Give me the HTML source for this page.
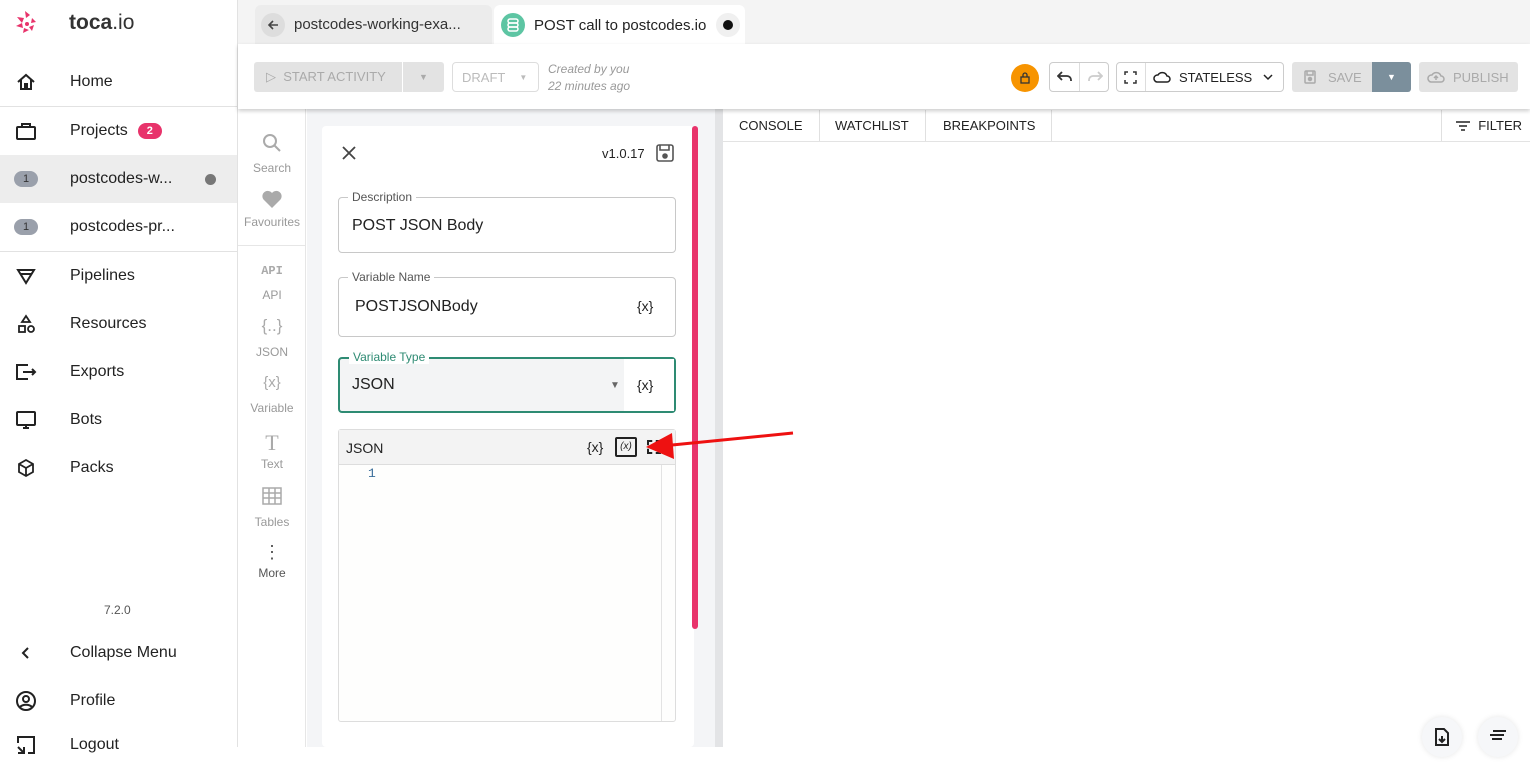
<!DOCTYPE html>
<html><head><meta charset="utf-8"><style>
*{box-sizing:border-box;margin:0;padding:0}
body{width:1530px;height:747px;overflow:hidden;font-family:"Liberation Sans",sans-serif;color:#222;background:#fff;position:relative}
.abs{position:absolute}
.side{left:0;top:0;width:238px;height:747px;border-right:1px solid #e2e2e2;background:#fff}
.nav{position:absolute;left:0;width:237px;height:48px;display:flex;align-items:center;font-size:16px;color:#222}
.nav .ic{width:70px;display:flex;justify-content:center;padding-right:18px}
.badge{background:#9aa0ab;color:#333;font-size:11px;border-radius:8px;width:24px;height:16px;display:flex;align-items:center;justify-content:center}
.hr{position:absolute;left:0;width:237px;height:1px;background:#e2e2e2}
.pal{position:absolute;left:238px;width:68px;text-align:center;font-size:12px;color:#999}
.fld{position:absolute;border:1px solid #c8c8c8;border-radius:4px}
.lbl{position:absolute;top:-8px;left:9px;background:#fff;padding:0 4px;font-size:12px;color:#555}
.btn{position:absolute;border:1px solid #ccc;border-radius:4px;background:#fff}
.tab{position:absolute;top:110px;height:31px;display:flex;align-items:center;font-size:13px;color:#222;border-right:1px solid #e0e0e0;padding:0 16px}
</style></head><body>
<div class="abs side">
 <svg class="abs" style="left:14px;top:9px" width="26" height="28" viewBox="0 0 26 28"><g fill="#e8336b"><path d="M11 2l5 4-4 3z"/><path d="M3 8l7 1-2 5z"/><path d="M2 17l6-3 1 5z"/><path d="M9 24l1-5 5 2z"/><path d="M18 22l-3-4 5-2z"/><path d="M22 13l-5 1 1-5z"/><circle cx="13" cy="15" r="2"/></g></svg>
 <div class="abs" style="left:69px;top:11px;font-size:21px;color:#333"><b style="font-weight:700">toca</b>.io</div>
 <div class="nav" style="top:58px"><span class="ic"><svg width="20" height="20" viewBox="0 0 20 20" fill="none" stroke="#222" stroke-width="2"><path d="M2 10L10 3l8 7M5 8v9h4v-5h2v5h4V8"/></svg></span>Home</div>
 <div class="hr" style="top:106px"></div>
 <div class="nav" style="top:107px"><span class="ic"><svg width="22" height="20" viewBox="0 0 22 20" fill="none" stroke="#222" stroke-width="2"><rect x="2" y="6" width="18" height="12" rx="1"/><path d="M7 6V3h8v3"/></svg></span>Projects<span style="margin-left:10px;background:#e8336b;color:#fff;font-size:11px;font-weight:bold;border-radius:8px;width:24px;height:16px;display:inline-flex;align-items:center;justify-content:center">2</span></div>
 <div class="nav" style="top:155px;background:#ededed"><span class="ic"><span class="badge">1</span></span>postcodes-w...<span style="position:absolute;left:205px;width:11px;height:11px;border-radius:50%;background:#777"></span></div>
 <div class="nav" style="top:203px"><span class="ic"><span class="badge">1</span></span>postcodes-pr...</div>
 <div class="hr" style="top:251px"></div>
 <div class="nav" style="top:252px"><span class="ic"><svg width="20" height="20" viewBox="0 0 20 20" fill="none" stroke="#222" stroke-width="2"><path d="M2 4h16L10 17z M5 8h10"/></svg></span>Pipelines</div>
 <div class="nav" style="top:300px"><span class="ic"><svg width="20" height="20" viewBox="0 0 20 20" fill="none" stroke="#222" stroke-width="1.8"><path d="M10 2l4 6H6z"/><rect x="3" y="12" width="6" height="6"/><circle cx="15" cy="15" r="3"/></svg></span>Resources</div>
 <div class="nav" style="top:348px"><span class="ic"><svg width="22" height="20" viewBox="0 0 22 20" fill="none" stroke="#222" stroke-width="2"><path d="M13 3H2v14h11M8 10h12M17 7l3 3-3 3"/></svg></span>Exports</div>
 <div class="nav" style="top:396px"><span class="ic"><svg width="22" height="20" viewBox="0 0 22 20" fill="none" stroke="#222" stroke-width="2"><rect x="2" y="2" width="18" height="13" rx="1"/><path d="M8 18h6M11 15v3"/></svg></span>Bots</div>
 <div class="nav" style="top:444px"><span class="ic"><svg width="20" height="20" viewBox="0 0 20 20" fill="none" stroke="#222" stroke-width="1.8"><path d="M10 2l7 4v8l-7 4-7-4V6zM3 6l7 4 7-4M10 10v8"/></svg></span>Packs</div>
 <div class="abs" style="left:104px;top:603px;font-size:12px;color:#555">7.2.0</div>
 <div class="nav" style="top:629px"><span class="ic"><svg width="12" height="16" viewBox="0 0 12 16" fill="none" stroke="#222" stroke-width="2"><path d="M8 3L3 8l5 5"/></svg></span>Collapse Menu</div>
 <div class="nav" style="top:677px"><span class="ic"><svg width="22" height="22" viewBox="0 0 22 22" fill="none" stroke="#222" stroke-width="2"><circle cx="11" cy="11" r="9"/><circle cx="11" cy="9" r="3"/><path d="M5 17c3-3 9-3 12 0"/></svg></span>Profile</div>
 <div class="nav" style="top:721px"><span class="ic"><svg width="20" height="20" viewBox="0 0 20 20" fill="none" stroke="#222" stroke-width="2"><path d="M2 8V2h16v16h-6M2 12l6 6M8 12v6H2"/></svg></span>Logout</div>
</div>
<!-- tab bar -->
<div class="abs" style="left:238px;top:0;width:1292px;height:44px;background:#f4f4f4"></div>
<div class="abs" style="left:255px;top:5px;width:237px;height:39px;background:#ececec;border-radius:6px 6px 0 0;display:flex;align-items:center;font-size:15px;color:#333"><span style="margin-left:6px;width:24px;height:24px;border-radius:50%;background:#ddd;display:flex;align-items:center;justify-content:center;margin-right:9px"><svg width="12" height="12" viewBox="0 0 12 12" fill="none" stroke="#444" stroke-width="1.6"><path d="M11 6H2M6 2L2 6l4 4"/></svg></span>postcodes-working-exa...</div>
<div class="abs" style="left:494px;top:5px;width:251px;height:40px;background:#fff;border-radius:6px 6px 0 0;display:flex;align-items:center;font-size:15px;color:#222"><span style="margin-left:7px;width:24px;height:24px;border-radius:50%;background:#5dc5a3;margin-right:9px;display:flex;align-items:center;justify-content:center"><svg width="12" height="14" viewBox="0 0 12 14" fill="none" stroke="#fff" stroke-width="1.5"><rect x="1" y="1" width="10" height="4" rx="2"/><rect x="1" y="5" width="10" height="4" rx="2"/><rect x="1" y="9" width="10" height="4" rx="2"/></svg></span>POST call to postcodes.io<span style="margin-left:10px;width:24px;height:24px;border-radius:50%;background:#f0f0f0;display:flex;align-items:center;justify-content:center"><span style="width:10px;height:10px;border-radius:50%;background:#111"></span></span></div>
<!-- toolbar -->
<div class="abs" style="left:238px;top:44px;width:1292px;height:65px;background:#fff;box-shadow:0 2px 4px rgba(0,0,0,.2);z-index:2">
 <div class="abs" style="left:16px;top:18px;width:148px;height:30px;background:#e3e3e3;border-radius:3px 0 0 3px;font-size:13px;color:#aaa;display:flex;align-items:center;padding-left:12px">&#9655;&nbsp;&nbsp;START ACTIVITY</div>
 <div class="abs" style="left:165px;top:18px;width:41px;height:30px;background:#e3e3e3;border-radius:0 3px 3px 0;font-size:9px;color:#aaa;display:flex;align-items:center;justify-content:center">&#9660;</div>
 <div class="btn" style="left:214px;top:18px;width:87px;height:30px;border-color:#ddd;font-size:13px;color:#bbb;display:flex;align-items:center;padding-left:9px">DRAFT<span style="font-size:8px;margin-left:14px">&#9660;</span></div>
 <div class="abs" style="left:310px;top:17px;font-size:12px;font-style:italic;color:#999;line-height:17px">Created by you<br>22 minutes ago</div>
 <div class="abs" style="left:773px;top:20px;width:28px;height:28px;border-radius:50%;background:#f79400;display:flex;align-items:center;justify-content:center"><svg width="10" height="12" viewBox="0 0 10 12" fill="none" stroke="#333" stroke-width="1.3"><rect x="1" y="5" width="8" height="6"/><path d="M3 5V3a2 2 0 014 0v2"/></svg></div>
 <div class="btn" style="left:811px;top:18px;width:60px;height:30px"><span class="abs" style="left:29px;top:0;width:1px;height:28px;background:#ddd"></span><svg class="abs" style="left:7px;top:8px" width="16" height="12" viewBox="0 0 16 12" fill="none" stroke="#333" stroke-width="1.8"><path d="M2 5h8a4 4 0 014 4v1M5 1L1 5l4 4"/></svg><svg class="abs" style="left:37px;top:8px" width="16" height="12" viewBox="0 0 16 12" fill="none" stroke="#ccc" stroke-width="1.8"><path d="M14 5H6a4 4 0 00-4 4v1M11 1l4 4-4 4"/></svg></div>
 <div class="btn" style="left:878px;top:18px;width:168px;height:30px;font-size:13px;color:#222"><svg class="abs" style="left:7px;top:8px" width="13" height="13" viewBox="0 0 13 13" fill="none" stroke="#333" stroke-width="1.5"><path d="M1 4V1h3M9 1h3v3M12 9v3H9M4 12H1V9"/></svg><span class="abs" style="left:28px;top:0;width:1px;height:28px;background:#ddd"></span><svg class="abs" style="left:36px;top:7px" width="18" height="14" viewBox="0 0 18 14" fill="none" stroke="#222" stroke-width="1.5"><path d="M4 12h10a3 3 0 000-6 5 5 0 00-9-1 3.5 3.5 0 00-1 7z"/></svg><span class="abs" style="left:62px;top:7px">STATELESS</span><svg class="abs" style="left:146px;top:11px" width="10" height="7" viewBox="0 0 10 7" fill="none" stroke="#222" stroke-width="1.5"><path d="M1 1l4 4 4-4"/></svg></div>
 <div class="abs" style="left:1054px;top:18px;width:80px;height:30px;background:#e3e3e3;border-radius:3px 0 0 3px;font-size:13px;color:#aaa;display:flex;align-items:center;padding-left:12px"><svg width="12" height="14" viewBox="0 0 12 14" fill="none" stroke="#aaa" stroke-width="1.5" style="margin-right:12px"><rect x="1" y="1" width="10" height="12" rx="1"/><path d="M3 1v4h6V1"/><circle cx="6" cy="9" r="1.5" fill="#aaa"/></svg>SAVE</div>
 <div class="abs" style="left:1134px;top:18px;width:39px;height:30px;background:#7b8f9c;border-radius:0 3px 3px 0;color:#fff;font-size:9px;display:flex;align-items:center;justify-content:center">&#9660;</div>
 <div class="abs" style="left:1181px;top:18px;width:99px;height:30px;background:#e3e3e3;border-radius:3px;font-size:13px;color:#aaa;display:flex;align-items:center;padding-left:8px"><svg width="18" height="14" viewBox="0 0 18 14" fill="none" stroke="#aaa" stroke-width="1.5" style="margin-right:8px"><path d="M4 12h10a3 3 0 000-6 5 5 0 00-9-1 3.5 3.5 0 00-1 7zM9 10V6M7 8l2-2 2 2"/></svg>PUBLISH</div>
</div>
<!-- palette -->
<div class="abs" style="left:238px;top:109px;width:68px;height:638px;background:#fff;border-right:1px solid #e6e6e6"></div>
<div class="abs" style="left:238px;top:245px;width:68px;height:1px;background:#e6e6e6"></div>
<div class="pal" style="top:133px"><svg width="20" height="20" viewBox="0 0 20 20" fill="none" stroke="#aaa" stroke-width="2"><circle cx="8" cy="8" r="6"/><path d="M12.5 12.5L18 18"/></svg><div style="margin-top:5px">Search</div></div>
<div class="pal" style="top:189px"><svg width="22" height="20" viewBox="0 0 22 20"><path d="M11 19L2.5 10.5A5 5 0 0111 4a5 5 0 018.5 6.5z" fill="#aaa"/></svg><div style="margin-top:3px">Favourites</div></div>
<div class="pal" style="top:264px"><div style="font-family:'Liberation Mono',monospace;font-weight:bold;font-size:12px;color:#aaa;height:16px">API</div><div style="margin-top:8px">API</div></div>
<div class="pal" style="top:316px"><div style="font-size:17px;color:#aaa;height:20px">{..}</div><div style="margin-top:9px">JSON</div></div>
<div class="pal" style="top:374px"><div style="font-size:15px;color:#aaa;height:18px">{x}</div><div style="margin-top:9px">Variable</div></div>
<div class="pal" style="top:430px"><div style="font-family:'Liberation Serif',serif;font-size:22px;color:#aaa;height:22px">T</div><div style="margin-top:5px">Text</div></div>
<div class="pal" style="top:486px"><svg width="20" height="20" viewBox="0 0 20 20" fill="none" stroke="#aaa" stroke-width="1.5"><rect x="1" y="2" width="18" height="16"/><path d="M1 7h18M1 12h18M7 2v16M13 2v16"/></svg><div style="margin-top:6px">Tables</div></div>
<div class="pal" style="top:542px;color:#555"><div style="font-size:18px;line-height:20px;color:#555">&#8942;</div><div style="margin-top:4px">More</div></div>
<!-- center gray area -->
<div class="abs" style="left:307px;top:109px;width:408px;height:638px;background:#f4f5f7"></div>
<div class="abs" style="left:322px;top:126px;width:372px;height:621px;background:#fff;border-radius:4px"></div>
<div class="abs" style="left:692px;top:126px;width:6px;height:503px;background:#e8336b;border-radius:3px"></div>
<div class="abs" style="left:715px;top:109px;width:8px;height:638px;background:#e3e4e6"></div>
<svg class="abs" style="left:341px;top:145px" width="16" height="16" viewBox="0 0 16 16" stroke="#444" stroke-width="1.8"><path d="M2 2l12 12M14 2L2 14"/></svg>
<div class="abs" style="left:602px;top:146px;font-size:13px;color:#222">v1.0.17</div>
<svg class="abs" style="left:655px;top:143px" width="20" height="20" viewBox="0 0 20 20" fill="none" stroke="#555" stroke-width="1.6"><rect x="2" y="2" width="16" height="16" rx="2"/><path d="M5 2v5h9V2"/><circle cx="10" cy="13" r="2" fill="#555"/></svg>
<div class="fld" style="left:338px;top:197px;width:338px;height:56px"><span class="lbl">Description</span><span class="abs" style="left:13px;top:19px;font-size:16px">POST JSON Body</span></div>
<div class="fld" style="left:338px;top:277px;width:338px;height:60px"><span class="lbl">Variable Name</span><span class="abs" style="left:16px;top:20px;font-size:16px">POSTJSONBody</span><span class="abs" style="left:298px;top:20px;font-size:14px">{x}</span></div>
<div class="fld" style="left:338px;top:357px;width:338px;height:56px;border:2px solid #2e8b73;background:#f3f4f5"><span class="lbl" style="color:#2e8b73;top:-9px">Variable Type</span><span class="abs" style="left:12px;top:17px;font-size:16px">JSON</span><span class="abs" style="left:270px;top:21px;font-size:10px;color:#666">&#9660;</span><span class="abs" style="left:284px;top:0;width:50px;height:52px;background:#fff"></span><span class="abs" style="left:297px;top:18px;font-size:14px">{x}</span></div>
<div class="abs" style="left:338px;top:429px;width:338px;height:293px;border:1px solid #ddd;border-radius:3px;background:#fefefd"></div>
<div class="abs" style="left:339px;top:430px;width:336px;height:35px;background:#f3f3f3;border-bottom:1px solid #ddd"><span class="abs" style="left:7px;top:10px;font-size:14px">JSON</span><span class="abs" style="left:248px;top:9px;font-size:14px">{x}</span><span class="abs" style="left:276px;top:7px;width:22px;height:20px;border:2px solid #222;border-radius:2px;font-size:10px;font-style:italic;text-align:center;line-height:16px">(x)</span><span class="abs" style="left:308px;top:10px;width:14px;height:14px;border:2px dashed #222"></span></div>
<div class="abs" style="left:368px;top:466px;font-size:13px;color:#3a6d99;font-family:'Liberation Mono',monospace">1</div>
<div class="abs" style="left:661px;top:465px;width:1px;height:256px;background:#e3e3e3"></div>
<!-- red arrow -->
<svg class="abs" style="left:640px;top:425px;z-index:3" width="160" height="35" viewBox="0 0 160 35"><path d="M153 8L22 21" stroke="#ee1111" stroke-width="3"/><path d="M6 22l26-14 2 26z" fill="#ee1111"/></svg>
<!-- right panel -->
<div class="abs" style="left:723px;top:109px;width:807px;height:33px;border-bottom:1px solid #e3e3e3;background:#fff"></div>
<div class="tab" style="left:723px">CONSOLE</div>
<div class="tab" style="left:819px">WATCHLIST</div>
<div class="tab" style="left:927px">BREAKPOINTS</div>
<div class="abs" style="left:1441px;top:110px;height:31px;border-left:1px solid #e0e0e0;display:flex;align-items:center;font-size:13px;padding-left:13px"><svg width="16" height="12" viewBox="0 0 16 12" stroke="#222" stroke-width="1.6"><path d="M1 2h14M4 6h8M6 10h4"/></svg>&nbsp;&nbsp;FILTER</div>
<div class="abs" style="left:1422px;top:717px;width:40px;height:40px;border-radius:50%;background:#f6f7f9;box-shadow:0 0 6px rgba(0,0,0,.1)"><svg class="abs" style="left:12px;top:10px" width="16" height="20" viewBox="0 0 16 20" fill="none" stroke="#222" stroke-width="2"><path d="M2 2h8l4 4v12H2z"/><path d="M8 9v6M5 12l3 3 3-3"/></svg></div>
<div class="abs" style="left:1478px;top:717px;width:40px;height:40px;border-radius:50%;background:#f6f7f9;box-shadow:0 0 6px rgba(0,0,0,.1)"><svg class="abs" style="left:11px;top:12px" width="18" height="12" viewBox="0 0 18 12" stroke="#222" stroke-width="2"><path d="M4 2h13M1 6h14M3 10h10"/></svg></div>
</body></html>
